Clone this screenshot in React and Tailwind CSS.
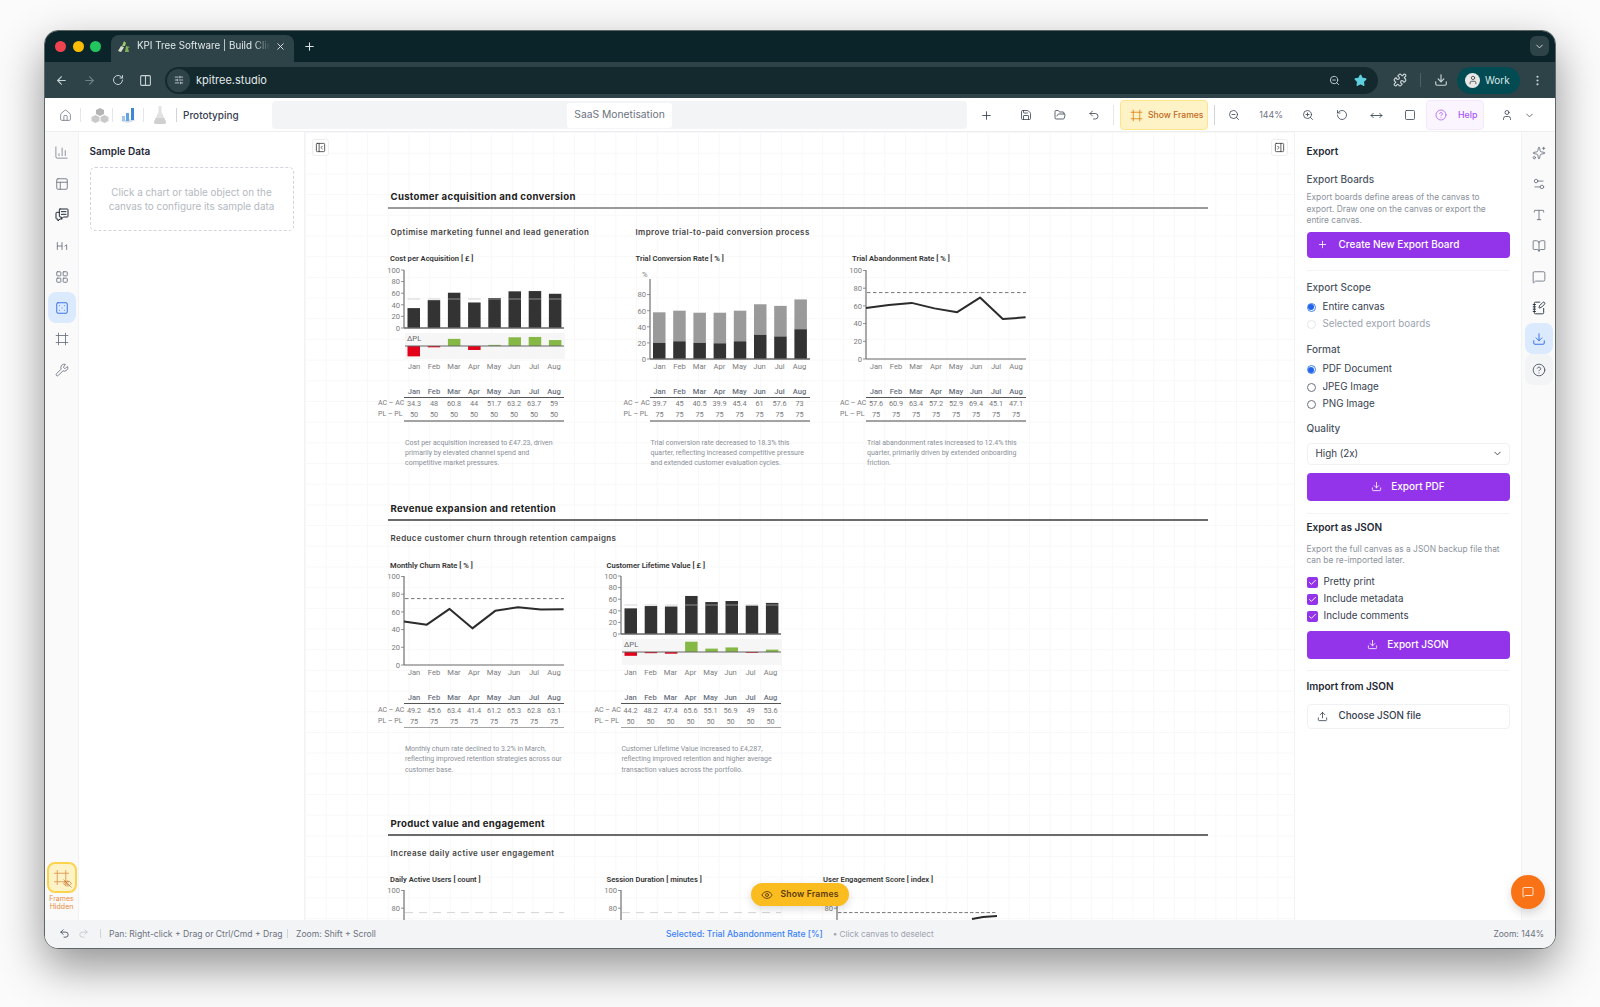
import React from 'react';
import {
  ArrowLeft, ArrowRight, RotateCw, Columns2, SlidersHorizontal, Star, Puzzle, Download, EllipsisVertical,
  ChevronDown, X, Plus, House, Save, FolderOpen, Undo2, Redo2, Frame, ZoomOut, ZoomIn, RotateCcw, MoveHorizontal,
  Square, CircleHelp, User, ChartColumn, PanelsTopLeft, Heading1, LayoutGrid, Dice5, Wrench, EyeOff,
  Sparkles, Settings2, Type, BookOpen, MessageSquare, NotebookPen, Upload, Check, Eye, PanelLeftClose, PanelRightClose,
} from 'lucide-react';

const MONTHS = ['Jan', 'Feb', 'Mar', 'Apr', 'May', 'Jun', 'Jul', 'Aug'];

const Axis = ({ top, zero, scale, ticks, bottom }) => (
  <g>
    <line x1="14" x2="14" y1={top} y2={bottom ?? zero} stroke="#555" strokeWidth="1" />
    {ticks.map((t) => (
      <g key={t}>
        <line x1="11" x2="14" y1={zero - t * scale} y2={zero - t * scale} stroke="#777" strokeWidth="0.8" />
        <text x="10" y={zero - t * scale + 2.8} textAnchor="end" fontSize="7.6" fill="#7c7c7c">{t}</text>
      </g>
    ))}
  </g>
);

// column chart with the delta strip below it
const BarDelta = ({ ac }) => {
  const zero = 63;
  return (
    <svg className="block overflow-visible" width="180" height="97" style={{ fontFamily: 'Roboto, sans-serif' }}>
      <rect x="15" y="68" width="160" height="26" fill="#f6f6f6" />
      <Axis top={5} zero={zero} scale={0.58} ticks={[100, 80, 60, 40, 20, 0]} />
      {ac.map((v, i) => (
        <g key={i}>
          <rect x={17.5 + i * 20.2} y={zero - v * 0.58} width="12.5" height={v * 0.58} fill="#333" />
          <line x1={17.5 + i * 20.2} x2={30 + i * 20.2} y1={zero - 29} y2={zero - 29} stroke="#bdbdbd" strokeOpacity="0.55" strokeWidth="1.2" />
          <rect
            x={17.5 + i * 20.2}
            y={v >= 50 ? 81 - (v - 50) * 0.66 : 81}
            width="12.5"
            height={Math.max(Math.abs(v - 50) * 0.66, 0.8)}
            fill={v >= 50 ? '#86b846' : '#e3001b'}
          />
        </g>
      ))}
      <line x1="14" x2="174" y1={zero} y2={zero} stroke="#666" strokeWidth="1.4" />
      <line x1="15" x2="174" y1="81" y2="81" stroke="#666" strokeWidth="1.2" />
      <text x="17" y="76" fontSize="7.6" fill="#666">ΔPL</text>
    </svg>
  );
};

const Stacked = ({ rows }) => {
  const zero = 94;
  return (
    <svg className="block overflow-visible" width="180" height="97" style={{ fontFamily: 'Roboto, sans-serif' }}>
      <text x="6" y="12" fontSize="7.6" fill="#7c7c7c">%</text>
      <Axis top={14} zero={zero} scale={0.805} ticks={[80, 60, 40, 20, 0]} />
      {rows.map(([dark, total], i) => (
        <g key={i}>
          <rect x={17 + i * 20.2} y={zero - total * 0.805} width="12.5" height={(total - dark) * 0.805} fill="#9a9a9a" />
          <rect x={17 + i * 20.2} y={zero - dark * 0.805} width="12.5" height={dark * 0.805} fill="#333" />
        </g>
      ))}
      <line x1="14" x2="174" y1={zero} y2={zero} stroke="#666" strokeWidth="1.4" />
    </svg>
  );
};

const LineChart = ({ ac }) => {
  const zero = 94;
  const pts = ac.map((v, i) => `${14 + i * 22.8},${zero - v * 0.885}`).join(' ');
  return (
    <svg className="block overflow-visible" width="180" height="97" style={{ fontFamily: 'Roboto, sans-serif' }}>
      <Axis top={5} zero={zero} scale={0.885} ticks={[100, 80, 60, 40, 20, 0]} />
      <line x1="15" x2="174" y1={zero - 66.4} y2={zero - 66.4} stroke="#777" strokeWidth="1" strokeDasharray="3.5 2.5" />
      <polyline points={pts} fill="none" stroke="#2b2b2b" strokeWidth="2" strokeLinejoin="round" />
      <line x1="14" x2="174" y1={zero} y2={zero} stroke="#666" strokeWidth="1.2" />
    </svg>
  );
};

const DataTable = ({ ac, pl }) => (
  <div className="mt-[15px] w-[174px] text-[7.300px] leading-[11px] text-[#7a7a7a]">
    <div className="ml-[14px] box-content flex h-[10px] w-[160px] border-b-[1.5px] border-[#555] text-[7.600px] font-medium text-[#6b7280]">
      {MONTHS.map((m) => <div key={m} className="w-[20px] text-center leading-[9px]">{m}</div>)}
    </div>
    <div className="mt-[0.5px] flex">
      <div className="-ml-[12px] w-[26px] whitespace-nowrap text-[7px]">AC – AC</div>
      {ac.map((v, i) => <div key={i} className="w-[20px] text-center">{v}</div>)}
    </div>
    <div className="flex">
      <div className="-ml-[12px] w-[26px] whitespace-nowrap text-[7px]">PL – PL</div>
      {ac.map((_, i) => <div key={i} className="w-[20px] text-center">{pl}</div>)}
    </div>
    <div className="ml-[14px] h-[1.5px] w-[160px] bg-[#a3a3a3]" />
  </div>
);

const ChartBlock = ({ title, chart, ac, pl, note, wide }) => (
  <div className={`${wide ? 'w-[245.500px]' : 'w-[216.500px]'} shrink-0 font-['Roboto',sans-serif]`}>
    <div className="h-[11px] whitespace-nowrap text-[7.600px] font-semibold leading-[11px] text-[#333]">{title}</div>
    <div className="mt-[0.5px]">{chart}</div>
    <div className="ml-[14px] flex h-[10px] w-[160px] text-[7.600px] leading-[10px] text-[#7c7c7c]">
      {MONTHS.map((m) => <div key={m} className="w-[20px] text-center">{m}</div>)}
    </div>
    <DataTable ac={ac} pl={pl} />
    <p className="ml-[15px] mt-[16px] w-[160px] text-[7px] leading-[10.300px] text-[#8a8f98]">{note}</p>
  </div>
);

const CutChart = ({ title, dash, line }) => (
  <div className="w-[216.500px] shrink-0 font-['Roboto',sans-serif]">
    <div className="h-[11px] whitespace-nowrap text-[7.600px] font-semibold leading-[11px] text-[#333]">{title}</div>
    <svg className="mt-[0.5px] block overflow-visible" width="180" height="97" style={{ fontFamily: 'Roboto, sans-serif' }}>
      <Axis top={5} zero={94} scale={0.885} ticks={[100, 80]} />
      <line x1="15" x2="174" y1="27.6" y2="27.6" stroke={dash} strokeWidth="1" strokeDasharray={line ? '3.5 2' : '8 6'} />
      {line && <polyline points="149,34 160,32 174,31" fill="none" stroke="#2b2b2b" strokeWidth="2" />}
    </svg>
  </div>
);

const SectionHead = ({ title, rule, children }) => (
  <div>
    <div className="ml-[2.500px] h-[14px] whitespace-nowrap text-[9.600px] font-bold leading-[15px] tracking-[0.3px] text-[#222]">{title}</div>
    <div className={`mt-[4px] w-[820px] ${rule}`} />
    {children}
  </div>
);

const Sub = ({ children, className }) => (
  <div className={`h-[12px] whitespace-nowrap text-[8px] font-semibold leading-[12px] tracking-[0.4px] text-[#444] ${className}`}>{children}</div>
);

const RailButton = ({ icon: Icon, className = 'text-[#6b7280]', size = 14, stroke = 1.5 }) => (
  <div className={`flex h-[31px] w-[28px] items-center justify-center rounded-lg ${className}`}>
    <Icon size={size} strokeWidth={stroke} />
  </div>
);

const CommentsIcon = ({ size, strokeWidth }) => (
  <svg width={size} height={size} viewBox="0 0 24 24" fill="none" stroke="currentColor" strokeWidth={strokeWidth} strokeLinecap="round" strokeLinejoin="round">
    <path d="M9 3h11a1 1 0 0 1 1 1v10a1 1 0 0 1-1 1h-6l-3 3v-3H9a1 1 0 0 1-1-1V4a1 1 0 0 1 1-1z" />
    <path d="M11 7h7M11 11h7" />
    <path d="M8 8H4a1 1 0 0 0-1 1v8a1 1 0 0 0 1 1h2v3l3-3h3" />
  </svg>
);

const Radio = ({ on, dim, children }) => (
  <div className={`flex h-[17.300px] items-center gap-[7px] text-[9.800px] ${dim ? 'text-[#9ca3af]' : 'text-[#374151]'}`}>
    <span className={`flex h-[9px] w-[9px] items-center justify-center rounded-full border ${on ? 'border-[#3b82f6]' : dim ? 'border-[#e5e7eb]' : 'border-[#6b7280]'}`}>
      {on && <span className="h-[6px] w-[6px] rounded-full bg-[#2563eb]" />}
    </span>
    {children}
  </div>
);

const Tick = ({ children }) => (
  <div className="flex h-[17px] items-center gap-[6px] text-[9.800px] text-[#374151]">
    <span className="flex h-[11px] w-[11px] items-center justify-center rounded-[2px] bg-[#9333ea]">
      <Check size={9} strokeWidth={2.5} className="text-white" />
    </span>
    {children}
  </div>
);

const PurpleButton = ({ icon: Icon, children, className }) => (
  <div className={`flex items-center justify-center rounded-[4px] bg-[#9333ea] text-[10px] font-medium text-white ${className}`}>
    <Icon size={11} strokeWidth={1.8} className="mr-[9px]" />
    {children}
  </div>
);

const Cubes = () => (
  <svg width="18" height="16" viewBox="0 0 18 16">
    <path d="M9 1l4 2v4L9 9 5 7V3z" fill="#b5b5b5" />
    <path d="M4.5 8l4 2v4l-4 2-4-2v-4zM13.5 8l4 2v4l-4 2-4-2v-4z" fill="#c9c9c9" />
  </svg>
);

const Bars3d = () => (
  <svg width="18" height="16" viewBox="0 0 18 16">
    <path d="M1 14l8 2 8-3-8-1z" fill="#d7dde6" />
    <rect x="3" y="9" width="3" height="5" fill="#9ec5ee" />
    <rect x="7" y="6" width="3" height="8" fill="#62a3e4" />
    <rect x="12" y="1" width="3" height="12" fill="#3f86d6" />
  </svg>
);

const Flask = () => (
  <svg width="14" height="20" viewBox="0 0 14 20">
    <path d="M5.5 1h3v6l4.5 9.5c.4 1.2-.3 2.5-1.6 2.5H2.6C1.3 19 .6 17.700 1 16.500L5.500 7z" fill="#e2e2e2" />
    <path d="M3 13h8l2 4c0 1-.6 2-1.600 2H2.600C1.600 19 1 18 1 17z" fill="#d0d0d0" />
  </svg>
);

const TreeIcon = () => (
  <svg width="14" height="13" viewBox="0 0 14 13">
    <path d="M5 6l2-5 2 2-1 3z" fill="#9cc66a" />
    <path d="M1 11l3-5 3 1-1 2-2 3z" fill="#d8dcc8" />
    <path d="M8 12l1-6 4 1-2 1 1 4z" fill="#7fae52" />
  </svg>
);

export default function App() {
  return (
    <div className="h-[1007px] w-[1600px] overflow-hidden bg-[#fbfbfb] pl-[44px] pt-[30px] font-['Inter',sans-serif]">
      <div className="relative flex h-[919px] w-[1512px] flex-col overflow-hidden rounded-[14px] border border-[#5f6668] bg-white shadow-[0_18px_45px_rgba(0,0,0,0.42)]">
        {/* tab strip */}
        <div className="flex h-[31px] shrink-0 items-end bg-[#0b2429]">
          <div className="flex h-[31px] items-center gap-[6.500px] self-center pl-[10px]">
            <span className="h-[11px] w-[11px] rounded-full bg-[#ef4450]" />
            <span className="h-[11px] w-[11px] rounded-full bg-[#fbbc05]" />
            <span className="h-[11px] w-[11px] rounded-full bg-[#22c55e]" />
          </div>
          <div className="ml-[10px] flex h-[27px] w-[183px] items-center rounded-t-[8px] bg-[#2d4347] pb-[5px] pl-[6px] pr-[8px] text-[9.800px] text-[#e3e9ea]">
            <TreeIcon />
            <span className="ml-[6px] w-[133px] overflow-hidden whitespace-nowrap [mask-image:linear-gradient(90deg,#000_88%,transparent)]">KPI Tree Software | Build Client</span>
            <X size={11} className="ml-auto text-[#e3e9ea]" />
          </div>
          <Plus size={13} className="mb-[9px] ml-[9px] text-[#dbe2e3]" />
          <div className="mb-[6px] ml-auto mr-[6px] flex h-[20px] w-[19px] items-center justify-center rounded-md bg-[#2d4347]">
            <ChevronDown size={11} className="text-[#dbe2e3]" />
          </div>
        </div>
        {/* browser toolbar */}
        <div className="flex h-[36px] shrink-0 items-center bg-[#2d4347] text-[#c9d3d5]">
          <ArrowLeft size={13} className="ml-[10px]" />
          <ArrowRight size={13} className="ml-[15px] text-[#718285]" />
          <RotateCw size={12} className="ml-[16px]" />
          <Columns2 size={13} className="ml-[15px]" />
          <div className="ml-[13px] flex h-[27px] w-[1213px] items-center rounded-full bg-[#13292e]">
            <span className="ml-[2px] flex h-[23px] w-[23px] items-center justify-center rounded-full bg-[#2d4347]">
              <SlidersHorizontal size={10} />
            </span>
            <span className="ml-[6px] text-[11px] text-[#e3e9ea]">kpitree.studio</span>
            <ZoomOut size={11} className="ml-auto" />
            <Star size={13} fill="#5fd0e0" className="ml-[14px] mr-[11px] text-[#5fd0e0]" />
          </div>
          <Puzzle size={14} className="ml-[15px]" />
          <div className="ml-[13px] h-[14px] w-px bg-[#4d6165]" />
          <Download size={14} className="ml-[13px]" />
          <div className="ml-[9px] flex h-[27px] w-[63px] items-center rounded-full bg-[#034b52] pl-[8px] text-[10px] text-[#dbe6e7]">
            <span className="flex h-[15px] w-[15px] items-center justify-center rounded-full bg-[#e8e8e8]">
              <User size={10} className="text-[#444]" />
            </span>
            <span className="ml-[5px]">Work</span>
          </div>
          <EllipsisVertical size={13} className="ml-[11px]" />
        </div>
        {/* app header */}
        <div className="flex h-[34px] shrink-0 items-center border-b border-[#eceef0] bg-white pt-[1px]">
          <div className="flex w-[227px] items-center text-[#6b7280]">
            <House size={13} strokeWidth={1.4} className="ml-[14px]" />
            <div className="ml-[8px] h-[14px] w-px bg-[#e5e7eb]" />
            <span className="ml-[7px] flex w-[23px] justify-center"><Cubes /></span>
            <div className="ml-[1px] h-[14px] w-px bg-[#e5e7eb]" />
            <span className="ml-[5px] flex w-[20px] justify-center"><Bars3d /></span>
            <div className="ml-[5px] h-[14px] w-px bg-[#e5e7eb]" />
            <span className="ml-[9px] flex w-[14px] justify-center"><Flask /></span>
            <div className="ml-[9px] h-[14px] w-px bg-[#d1d5db]" />
            <span className="ml-[6px] text-[10px] font-medium text-[#374151]">Prototyping</span>
          </div>
          <div className="flex h-[28px] w-[695px] items-center justify-center rounded-[4px] bg-[#f3f4f6]">
            <span className="flex h-[25px] w-[105px] items-center justify-center rounded-[3px] bg-white text-[10.300px] text-[#6b7280]">SaaS Monetisation</span>
          </div>
          <div className="flex flex-1 items-center text-[#374151]">
            <Plus size={13} strokeWidth={1.6} className="ml-[13px]" />
            <Save size={12} strokeWidth={1.6} className="ml-[27px]" />
            <FolderOpen size={12} strokeWidth={1.6} className="ml-[22px]" />
            <Undo2 size={12} strokeWidth={1.6} className="ml-[22px]" />
            <div className="ml-[13px] h-[20px] w-px bg-[#e5e7eb]" />
            <div className="ml-[6px] flex h-[30px] w-[88px] items-center whitespace-nowrap rounded-[4px] border border-[#fde68a] bg-[#fef3c7] pl-[9px] text-[8.600px] font-medium text-[#c2691c]">
              <Frame size={13} strokeWidth={1.4} className="mr-[5px] shrink-0 text-[#d97706]" />
              Show Frames
            </div>
            <div className="ml-[6px] h-[20px] w-px bg-[#d1d5db]" />
            <ZoomOut size={12} strokeWidth={1.6} className="ml-[13px]" />
            <span className="ml-[19px] w-[24px] text-center text-[8.800px] text-[#6b7280]">144%</span>
            <ZoomIn size={12} strokeWidth={1.6} className="ml-[19px]" />
            <RotateCcw size={12} strokeWidth={1.6} className="ml-[22px]" />
            <MoveHorizontal size={13} strokeWidth={1.6} className="ml-[22px]" />
            <Square size={12} strokeWidth={1.6} className="ml-[21px]" />
            <div className="ml-[10px] flex h-[30px] w-[58px] items-center rounded-[4px] border border-[#f3e8ff] bg-[#faf5ff] pl-[8px] text-[8.800px] font-medium text-[#a855f7]">
              <CircleHelp size={12} strokeWidth={1.5} className="mr-[11px]" />
              Help
            </div>
            <User size={12} strokeWidth={1.6} className="ml-[17px]" />
            <ChevronDown size={11} strokeWidth={1.6} className="ml-[11px]" />
          </div>
        </div>

        {/* body */}
        <div className="flex min-h-0 flex-1">
          <div className="flex w-[34px] shrink-0 flex-col items-center border-r border-[#f1f2f4] bg-[#fafafa] pt-[5px]">
            <RailButton icon={ChartColumn} size={15} stroke={1.2} />
            <RailButton icon={PanelsTopLeft} />
            <RailButton icon={CommentsIcon} size={16} className="text-[#1f2937]" />
            <RailButton icon={Heading1} />
            <RailButton icon={LayoutGrid} />
            <RailButton icon={Dice5} className="bg-[#dbeafe] text-[#2563eb]" />
            <RailButton icon={Frame} />
            <RailButton icon={Wrench} />
            <div className="relative mt-auto flex h-[31px] w-[30px] items-center justify-center rounded-lg border-2 border-[#fcd34d] bg-[#fef3c7] text-[#d9924a]">
              <Frame size={17} strokeWidth={1.2} />
              <EyeOff size={9} strokeWidth={1.6} className="absolute bottom-[3px] right-[3px] text-[#b9651f]" />
            </div>
            <div className="mb-[9px] mt-[2px] text-center text-[7px] leading-[8px] text-[#ea8a3a]">Frames<br />Hidden</div>
          </div>

          <div className="w-[226px] shrink-0 border-r border-[#f1f2f4] bg-white pl-[10.500px] pt-[12px]">
            <div className="text-[10px] font-semibold leading-[14px] text-[#1f2937]">Sample Data</div>
            <div className="mt-[9px] flex h-[64px] w-[204px] items-center justify-center rounded-[5px] border border-dashed border-[#d1d5db] text-center text-[9.900px] leading-[14px] text-[#b4b9c1]">
              Click a chart or table object on the<br />canvas to configure its sample data
            </div>
          </div>

          <div className="relative min-w-0 flex-1 overflow-hidden bg-white bg-[linear-gradient(#f8f8f8_1px,transparent_1px),linear-gradient(90deg,#f8f8f8_1px,transparent_1px)] bg-[size:20.700px_20.700px] pl-[83px] pt-[57px]">
            <div className="absolute left-[7px] top-[7px] flex h-[17px] w-[17px] items-center justify-center rounded-[3px] border border-[#eeeeee] bg-white text-[#333]">
              <PanelLeftClose size={11} strokeWidth={1.7} />
            </div>
            <div className="absolute right-[6px] top-[7px] flex h-[17px] w-[17px] items-center justify-center rounded-[3px] border border-[#eeeeee] bg-white text-[#333]">
              <PanelRightClose size={11} strokeWidth={1.7} />
            </div>

            <section className="h-[312px]">
              <SectionHead title="Customer acquisition and conversion" rule="h-[2px] bg-[#9a9a9a]">
                <div className="ml-[2.500px] mt-[17px] flex">
                  <Sub className="w-[245px]">Optimise marketing funnel and lead generation</Sub>
                  <Sub>Improve trial-to-paid conversion process</Sub>
                </div>
              </SectionHead>
              <div className="ml-[2px] mt-[15px] flex">
                <ChartBlock
                  wide
                  title="Cost per Acquisition [ £ ]"
                  chart={<BarDelta ac={[34.3, 48, 60.8, 44, 51.7, 63.2, 63.7, 59]} />}
                  ac={[34.3, 48, 60.8, 44, 51.7, 63.2, 63.7, 59]}
                  pl={50}
                  note="Cost per acquisition increased to £47.23, driven primarily by elevated channel spend and competitive market pressures."
                />
                <ChartBlock
                  title="Trial Conversion Rate [ % ]"
                  chart={<Stacked rows={[[20, 58], [22, 60], [20, 57.500], [19.500, 57.500], [22, 60], [30, 68], [28, 66], [37, 74]]} />}
                  ac={[39.7, 45, 40.5, 39.9, 45.4, 61, 57.6, 73]}
                  pl={75}
                  note="Trial conversion rate decreased to 18.3% this quarter, reflecting increased competitive pressure and extended customer evaluation cycles."
                />
                <ChartBlock
                  title="Trial Abandonment Rate [ % ]"
                  chart={<LineChart ac={[57.6, 60.9, 63.4, 57.2, 52.9, 69.4, 45.1, 47.1]} />}
                  ac={[57.6, 60.9, 63.4, 57.2, 52.9, 69.4, 45.1, 47.1]}
                  pl={75}
                  note="Trial abandonment rates increased to 12.4% this quarter, primarily driven by extended onboarding friction."
                />
              </div>
            </section>

            <section className="h-[315px]">
              <SectionHead title="Revenue expansion and retention" rule="h-[1.500px] bg-[#6b6b6b]">
                <Sub className="ml-[2.500px] mt-[11.500px]">Reduce customer churn through retention campaigns</Sub>
              </SectionHead>
              <div className="ml-[2px] mt-[15.500px] flex">
                <ChartBlock
                  title="Monthly Churn Rate [ % ]"
                  chart={<LineChart ac={[49.2, 45.6, 63.4, 41.4, 61.2, 65.3, 62.8, 63.1]} />}
                  ac={[49.2, 45.6, 63.4, 41.4, 61.2, 65.3, 62.8, 63.1]}
                  pl={75}
                  note="Monthly churn rate declined to 3.2% in March, reflecting improved retention strategies across our customer base."
                />
                <ChartBlock
                  title="Customer Lifetime Value [ £ ]"
                  chart={<BarDelta ac={[44.2, 48.2, 47.4, 65.6, 55.1, 56.9, 49, 53.6]} />}
                  ac={[44.2, 48.2, 47.4, 65.6, 55.1, 56.9, 49, 53.6]}
                  pl={50}
                  note="Customer Lifetime Value increased to £4,287, reflecting improved retention and higher average transaction values across the portfolio."
                />
              </div>
            </section>

            <section>
              <SectionHead title="Product value and engagement" rule="h-[1.500px] bg-[#6b6b6b]">
                <Sub className="ml-[2.500px] mt-[11px]">Increase daily active user engagement</Sub>
              </SectionHead>
              <div className="ml-[2px] mt-[15px] flex">
                <CutChart title="Daily Active Users [ count ]" dash="#d4d4d4" />
                <CutChart title="Session Duration [ minutes ]" dash="#d4d4d4" />
                <CutChart title="User Engagement Score [ index ]" dash="#777" line />
              </div>
            </section>

            <div className="absolute bottom-[14px] left-[446px] flex h-[23px] w-[98px] items-center justify-center gap-[7px] rounded-full bg-[#fbbc1f] text-[8.600px] font-semibold tracking-[0.2px] text-[#5b3a0b] shadow-[0_3px_8px_rgba(0,0,0,0.14)]">
              <Eye size={12} strokeWidth={1.7} />
              Show Frames
            </div>
          </div>

          <div className="w-[227px] shrink-0 border-l border-[#f1f2f4] bg-white px-[11.500px] pt-[12px]">
            <div className="text-[10px] font-semibold leading-[14px] text-[#1f2937]">Export</div>
            <div className="mt-[14px] text-[10px] font-medium leading-[14px] text-[#4b5563]">Export Boards</div>
            <p className="mt-[6px] text-[8.400px] leading-[11.500px] text-[#8b929c]">Export boards define areas of the canvas to export. Draw one on the canvas or export the entire canvas.</p>
            <div className="mt-[5px] flex h-[26px] items-center rounded-[4px] bg-[#9333ea] pl-[10px] text-[10px] font-medium text-white">
              <Plus size={11} strokeWidth={1.8} className="mr-[11px]" />
              Create New Export Board
            </div>
            <div className="mt-[12px] h-px bg-[#f3f4f6]" />
            <div className="mb-[5px] mt-[9px] text-[10px] font-medium leading-[14px] text-[#4b5563]">Export Scope</div>
            <Radio on>Entire canvas</Radio>
            <Radio dim>Selected export boards</Radio>
            <div className="mb-[5px] mt-[9px] text-[10px] font-medium leading-[14px] text-[#4b5563]">Format</div>
            <Radio on>PDF Document</Radio>
            <Radio>JPEG Image</Radio>
            <Radio>PNG Image</Radio>
            <div className="mt-[8px] text-[10px] font-medium leading-[14px] text-[#4b5563]">Quality</div>
            <div className="mt-[8px] flex h-[22px] items-center justify-between rounded-[4px] border border-[#f0f1f3] bg-white pl-[8px] pr-[6px] text-[9.800px] text-[#374151]">
              High (2x)
              <ChevronDown size={11} />
            </div>
            <PurpleButton icon={Download} className="mt-[8px] h-[28px]">Export PDF</PurpleButton>
            <div className="mt-[12px] h-px bg-[#f3f4f6]" />
            <div className="mt-[6px] text-[10px] font-semibold leading-[14px] text-[#1f2937]">Export as JSON</div>
            <p className="mb-[7px] mt-[10px] text-[8.400px] leading-[11.500px] text-[#8b929c]">Export the full canvas as a JSON backup file that can be re-imported later.</p>
            <Tick>Pretty print</Tick>
            <Tick>Include metadata</Tick>
            <Tick>Include comments</Tick>
            <PurpleButton icon={Download} className="mt-[6px] h-[28px]">Export JSON</PurpleButton>
            <div className="mt-[11px] h-px bg-[#f3f4f6]" />
            <div className="mt-[8px] text-[10px] font-semibold leading-[14px] text-[#1f2937]">Import from JSON</div>
            <div className="mt-[11px] flex h-[25px] items-center rounded-[4px] border border-[#f0f1f3] bg-white pl-[9px] text-[9.800px] font-medium text-[#374151]">
              <Upload size={11} strokeWidth={1.8} className="mr-[11px]" />
              Choose JSON file
            </div>
          </div>

          <div className="flex w-[34px] shrink-0 flex-col items-center border-l border-[#f1f2f4] bg-[#fafafa] pt-[5px]">
            <RailButton icon={Sparkles} />
            <RailButton icon={Settings2} />
            <RailButton icon={Type} />
            <RailButton icon={BookOpen} />
            <RailButton icon={MessageSquare} />
            <RailButton icon={NotebookPen} className="text-[#1f2937]" />
            <RailButton icon={Download} className="bg-[#dbeafe] text-[#2563eb]" />
            <RailButton icon={CircleHelp} className="bg-[#f3f4f6] text-[#4b5563]" />
          </div>
        </div>

        {/* status bar */}
        <div className="flex h-[28px] shrink-0 items-center bg-[#f3f4f6] text-[8.600px] text-[#6b7280]">
          <div className="flex w-[621px] items-center">
            <Undo2 size={11} className="ml-[14px] text-[#4b5563]" />
            <Redo2 size={11} className="ml-[8px] text-[#c5c9cf]" />
            <div className="ml-[11px] h-[9px] w-px bg-[#d1d5db]" />
            <span className="ml-[8px] w-[171px] whitespace-nowrap">Pan: Right-click + Drag or Ctrl/Cmd + Drag</span>
            <div className="ml-[7px] h-[9px] w-px bg-[#d1d5db]" />
            <span className="ml-[8px] whitespace-nowrap">Zoom: Shift + Scroll</span>
          </div>
          <span className="whitespace-nowrap text-[8.600px] font-medium text-[#3b82f6]">Selected: Trial Abandonment Rate [%]</span>
          <span className="ml-[10px] whitespace-nowrap text-[8.200px] text-[#9ca3af]">• Click canvas to deselect</span>
          <span className="ml-auto mr-[11px] whitespace-nowrap text-[8.500px]">Zoom: 144%</span>
        </div>

        <div className="absolute bottom-[39px] right-[10px] flex h-[34px] w-[34px] items-center justify-center rounded-full bg-[#f97316] text-white shadow-[0_4px_10px_rgba(0,0,0,0.15)]">
          <MessageSquare size={12} strokeWidth={1.6} />
        </div>
      </div>
    </div>
  );
}
